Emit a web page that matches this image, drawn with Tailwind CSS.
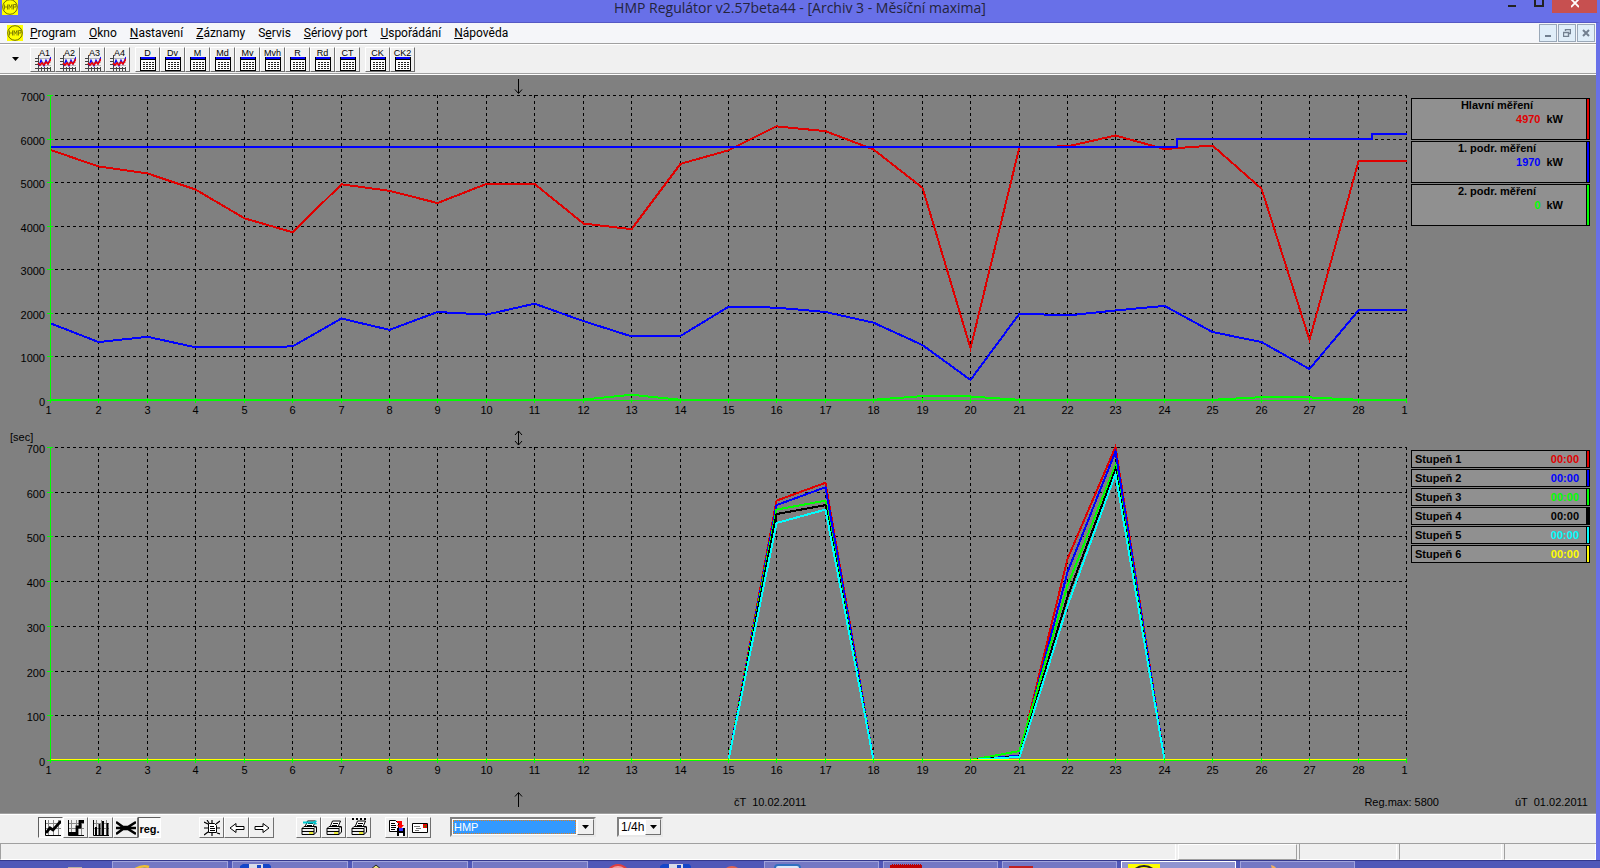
<!DOCTYPE html>
<html lang="cs">
<head>
<meta charset="utf-8">
<meta name="viewport" content="width=device-width, initial-scale=1">
<title>HMP Regulátor v2.57beta44 - [Archiv 3 - Měsíční maxima]</title>
<script src="https://cdn.jsdelivr.net/npm/@tailwindcss/browser@4"></script>
</head>
<body class="min-h-screen bg-[#f0f0f0] font-['Liberation_Sans',Arial,sans-serif] text-[11px] text-black">

<svg class="hidden" aria-hidden="true">
  <symbol id="i-hmp" viewBox="0 0 16 16">
    <rect width="16" height="16" fill="#ff0"/>
    <circle cx="8" cy="8" r="7.3" fill="none" stroke="#6b6b00"/>
    <path d="M2.5 5.5v5M5.5 5.5v5M2.5 8h3M7 10.500v-5l1.500 3 1.500-3v5M11.500 10.500v-5h2.500v2.500h-2.500" fill="none" stroke="#6b6b00" stroke-width=".8"/>
  </symbol>
  <symbol id="i-arch" viewBox="0 0 16 16">
    <path d="M3.500 0v16M0 13.500h16M0 3.500h3M0 6.500h3M0 9.500h3M6.500 12v4M9.500 12v4M12.500 12v4M15.500 12v4" stroke="#444" fill="none" shape-rendering="crispEdges"/>
    <path d="M4 3.500h12M4 7.500h12M4 10.500h12" stroke="#bbb" fill="none" shape-rendering="crispEdges"/>
    <path d="M4 11l2-6 3 6 2-6 2 4 3-7" stroke="#00f" stroke-width="1.200" fill="none"/>
    <path d="M3 8l2 2 2-2 2 2 2-3 2 2 3-5" stroke="#e00" stroke-width="1.600" fill="none"/>
  </symbol>
  <symbol id="i-table" viewBox="0 0 16 14">
    <g shape-rendering="crispEdges">
    <rect width="16" height="14" fill="#000"/>
    <rect x="1" y="0" width="14" height="2" fill="#00f"/>
    <rect x="1" y="3" width="14" height="10" fill="#fff"/>
    <path d="M3 5.500h11M3 7.500h11M3 9.500h11M3 11.500h11" stroke="#222" stroke-dasharray="2 1"/>
    </g>
  </symbol>
  <symbol id="i-grid" viewBox="0 0 16 16"><path d="M0 3.500h16M0 8.500h16M3.500 0v16M8.500 0v16M13.500 0v16" stroke="#888" fill="none" shape-rendering="crispEdges"/><path d="M.5 0v15.500H16" stroke="#000" fill="none"/></symbol>
  <symbol id="i-line" viewBox="0 0 16 16"><use href="#i-grid"/><path d="M1 13l4-5 3 2 8-9" stroke="#000" stroke-width="2.800" fill="none"/></symbol>
  <symbol id="i-step" viewBox="0 0 16 16"><use href="#i-grid"/><path d="M1 13.500h8V7h3V1.500h4" stroke="#000" stroke-width="2.800" fill="none"/></symbol>
  <symbol id="i-bars" viewBox="0 0 16 16"><use href="#i-grid"/><path d="M3 16V7M6.500 16V4M10 16V1M14.500 16V3" stroke="#000" stroke-width="2" fill="none"/></symbol>
  <symbol id="i-cross" viewBox="0 0 20 16"><path d="M0 2l7 5h5l8-5M0 14l7-5h5l8 5M0 8h20" stroke="#000" stroke-width="2.600" fill="none"/></symbol>
  <symbol id="i-gear" viewBox="0 0 16 16"><path d="M4.500 3.500h6l2 2v7h-8z" stroke="#000" fill="#fff"/><path d="M0 2l4 2M3 0l2 3M8 0v3M16 1l-4 3M0 8h4M13 8h3M0 15l4-3M16 14l-3-1M8 13v3M6 6.500h4M6 8.500h5M6 10.500h5" stroke="#000" stroke-width="1.200" fill="none"/></symbol>
  <symbol id="i-left" viewBox="0 0 16 12"><path d="M1 6l6-4.500v3h8v3H7v3z" stroke="#000" fill="#fff"/></symbol>
  <symbol id="i-right" viewBox="0 0 16 12"><path d="M15 6L9 1.500v3H1v3h8v3z" stroke="#000" fill="#fff"/></symbol>
  <symbol id="i-print" viewBox="0 0 16 16"><path d="M4 7l2.500-6h8L12 7" stroke="#000" fill="#fff"/><path d="M1 8.500l2-2h12l-2 2v6H1z" stroke="#000" fill="#eee"/><path d="M1 8.500h12M13 14.500l2.500-2.500V6.500M7 3.500h5M6 5.500h5M1 11.500h12" stroke="#000" fill="none"/><path d="M8 13h4" stroke="#ee0" stroke-width="1.500"/></symbol>
  <symbol id="i-copy" viewBox="0 0 16 16"><path d="M.5.500h6l3 3v8h-9z" stroke="#000" fill="#fff"/><path d="M2 3.500h4M2 5.500h5M2 7.500h5M2 9.500h4" stroke="#000"/><path d="M8 1h5v4h2l-3.500 4L8 5h2V3H8z" fill="#f00"/><path d="M8 8h8v8H8z"/><path d="M10 8h4v3h-4z" fill="#33f"/><path d="M10 13h4v3h-4z" fill="#fff"/></symbol>
  <symbol id="i-mail" viewBox="0 0 16 10"><path d="M.5.500h15v9H.5z" stroke="#000" fill="#fff"/><path d="M2 3.500h6M4 5.500h5M3 7.500h4" stroke="#777"/><path d="M11 1h4v4h-4z" fill="#e00"/><path d="M12.500 2.500h1.500v1.500h-1.500z" fill="#0a0"/></symbol>
  <symbol id="i-down" viewBox="0 0 7 4"><path d="M0 0h7L3.500 4z"/></symbol>
  <symbol id="i-floppy" viewBox="0 0 32 14"><path d="M0 2l3-2h26l2 2v12H0z" fill="#1446c8"/><path d="M9 0h14v14H9z" fill="#d8dce8"/><path d="M17 1h4v13h-4z" fill="#1446c8"/></symbol>
</svg>

<div class="flex min-h-screen flex-col">
  <!-- Window caption -->
  <header class="relative flex h-[22px] items-start justify-center overflow-hidden bg-[#6870e8]">
    <svg class="absolute -top-px left-[2px] size-4"><use href="#i-hmp"/></svg>
    <h1 class="font-['Open_Sans',sans-serif] text-[14px] leading-4 text-[#24243c]">HMP Regulátor v2.57beta44 - [Archiv 3 - Měsíční maxima]</h1>
    <div class="absolute top-0 right-[3px] flex h-[13px]">
      <button aria-label="Minimalizovat" class="w-[27px]"><svg class="mx-auto h-[13px] w-2" viewBox="0 0 8 13"><path d="M0 5h8v2H0z" fill="#222"/></svg></button>
      <button aria-label="Maximalizovat" class="w-[27px]"><svg class="mx-auto h-[13px] w-[10px]" viewBox="0 0 10 13"><path d="M1-2h8v8H1z" fill="none" stroke="#222" stroke-width="2"/></svg></button>
      <button aria-label="Zavřít" class="w-[45px] bg-[#c75050]"><svg class="mx-auto h-[13px] w-2" viewBox="0 0 8 13"><path d="M0-1l8 8M8-1L0 7" fill="none" stroke="#fff" stroke-width="1.800"/></svg></button>
    </div>
  </header>

  <div class="flex flex-1 flex-col border-t border-r-4 border-t-[#5558c4] border-r-[#6870e8]">
    <!-- Menu bar -->
    <nav class="flex h-[21px] items-center border-b border-[#a0a0a0] bg-[#f5f6f9] pl-[7px] font-[Roboto,sans-serif] text-[12px] leading-4">
      <svg class="mr-[7px] size-4"><use href="#i-hmp"/></svg>
      <div id="menu" class="flex gap-[13px]">
        <button><u>P</u>rogram</button><button><u>O</u>kno</button><button><u>N</u>astavení</button><button><u>Z</u>áznamy</button><button>S<u>e</u>rvis</button><button><u>S</u>ériový port</button><button><u>U</u>spořádání</button><button><u>N</u>ápověda</button>
      </div>
      <div class="ml-auto flex gap-px pr-px">
        <button aria-label="Minimalizovat okno" class="flex h-[18px] w-[18px] items-center justify-center border border-[#9aa8b8] bg-[#e0eef9]"><svg class="size-2" viewBox="0 0 8 8"><path d="M1 6h6v2H1z" fill="#728090"/></svg></button>
        <button aria-label="Obnovit okno" class="flex h-[18px] w-[18px] items-center justify-center border border-[#9aa8b8] bg-[#e0eef9]"><svg class="size-2" viewBox="0 0 8 8"><path d="M2.500 2V.500h5v4H6M.5 3.500h5v4h-5z" fill="none" stroke="#728090" stroke-width="1.400"/></svg></button>
        <button aria-label="Zavřít okno" class="flex h-[18px] w-[18px] items-center justify-center border border-[#9aa8b8] bg-[#e0eef9]"><svg class="size-2" viewBox="0 0 8 8"><path d="M1 1l6 6M7 1L1 7" stroke="#728090" stroke-width="2"/></svg></button>
      </div>
    </nav>

    <!-- Archive toolbar -->
    <div class="flex h-[30px] items-center border-t border-b border-t-white border-b-[#a0a0a0]">
      <button aria-label="Další" class="flex w-[30px] justify-center"><svg class="h-1 w-[7px]"><use href="#i-down"/></svg></button>
      <div id="archives" class="flex gap-[5px]"></div>
    </div>

    <!-- Charts and legends -->
    <main class="flex flex-1 flex-col border-t border-white bg-[#808080]">
      <div class="flex">
        <div class="flex min-w-0 flex-1 flex-col">
          <svg id="power" class="h-[350px] w-full" role="img" aria-label="Měsíční maxima, kW"></svg>
          <svg id="stages" class="h-[352px] w-full" role="img" aria-label="Stupně, sekundy"></svg>
        </div>
        <aside class="flex w-[186px] shrink-0 flex-col pt-[23px] pr-[6px] pl-px font-bold leading-[14px]">
          <section id="meters" class="flex flex-col gap-px"></section>
          <section id="levels" class="mt-[224px] flex flex-col gap-px"></section>
        </aside>
      </div>
      <div class="flex h-[34px] items-start pr-[8px]">
        <div class="flex w-[523px] justify-end pt-[15px]"><svg class="h-[15px] w-[9px]" viewBox="0 0 9 15"><path d="M4.500 15V1M1 4.500l3.500-4 3.500 4" fill="none" stroke="#000"/></svg></div>
        <time class="ml-[211px] pt-[18px] leading-[14px] whitespace-pre" datetime="2011-02-10">čT  10.02.2011</time>
        <p class="mr-[76px] ml-auto pt-[18px] leading-[14px]">Reg.max: 5800</p>
        <time class="pt-[18px] leading-[14px] whitespace-pre" datetime="2011-02-01">úT  01.02.2011</time>
      </div>
    </main>

    <!-- View toolbar -->
    <div class="flex h-[31px] items-start border-t border-b border-t-[#a0a0a0] border-b-[#a0a0a0] pt-[3px] pl-[38px] shadow-[inset_0_1px_0_#fff]">
      <div class="flex">
        <button aria-label="Spojnice" aria-pressed="true" class="flex h-[21px] w-[25px] items-center justify-center border border-t-[#606060] border-r-white border-b-white border-l-[#606060] bg-[#f8f8f8] pl-1"><svg class="size-4"><use href="#i-line"/></svg></button>
        <button aria-label="Schody" class="flex h-[21px] w-[25px] items-center justify-center border border-t-white border-r-[#707070] border-b-[#707070] border-l-white"><svg class="size-4"><use href="#i-step"/></svg></button>
        <button aria-label="Sloupce" class="flex h-[21px] w-[25px] items-center justify-center border border-t-white border-r-[#707070] border-b-[#707070] border-l-white"><svg class="size-4"><use href="#i-bars"/></svg></button>
        <button aria-label="Kříž" class="flex h-[21px] w-[25px] items-center justify-center border border-t-white border-r-[#707070] border-b-[#707070] border-l-white"><svg class="h-4 w-5"><use href="#i-cross"/></svg></button>
        <button aria-pressed="true" class="flex h-[21px] w-[23px] items-end justify-center border border-t-[#606060] border-r-white border-b-white border-l-[#606060] bg-[#f8f8f8] text-[11px] font-bold">reg.</button>
      </div>
      <div class="ml-[38px] flex">
        <button aria-label="Nastavení" class="flex h-[21px] w-[25px] items-center justify-center border border-t-white border-r-[#707070] border-b-[#707070] border-l-white"><svg class="size-4"><use href="#i-gear"/></svg></button>
        <button aria-label="Předchozí" class="flex h-[21px] w-[25px] items-center justify-center border border-t-white border-r-[#707070] border-b-[#707070] border-l-white"><svg class="h-3 w-4"><use href="#i-left"/></svg></button>
        <button aria-label="Následující" class="flex h-[21px] w-[25px] items-center justify-center border border-t-white border-r-[#707070] border-b-[#707070] border-l-white"><svg class="h-3 w-4"><use href="#i-right"/></svg></button>
      </div>
      <div class="ml-[22px] flex">
        <button aria-label="Nastavení tisku" class="flex h-[21px] w-[25px] items-center justify-center border border-t-white border-r-[#707070] border-b-[#707070] border-l-white"><svg class="size-4" viewBox="0 0 16 16"><use href="#i-print"/><path d="M2 2.500h11M15.500 1l-3 1.500 3 1.500" stroke="#00c8d0" stroke-width="1.800" fill="none"/></svg></button>
        <button aria-label="Tisk" class="flex h-[21px] w-[25px] items-center justify-center border border-t-white border-r-[#707070] border-b-[#707070] border-l-white"><svg class="size-4"><use href="#i-print"/></svg></button>
        <button aria-label="Tisk řady" class="flex h-[21px] w-[25px] items-center justify-center border border-t-white border-r-[#707070] border-b-[#707070] border-l-white"><svg class="h-[19px] w-4" viewBox="0 0 16 19"><use href="#i-print" y="2" width="16" height="16"/><path d="M1 1h14" stroke="#000" stroke-width="2" stroke-dasharray="2 2"/></svg></button>
      </div>
      <div class="ml-[14px] flex">
        <button aria-label="Uložit" class="flex h-[21px] w-[23px] items-center justify-center border border-t-white border-r-[#707070] border-b-[#707070] border-l-white"><svg class="size-4"><use href="#i-copy"/></svg></button>
        <button aria-label="Poslat" class="flex h-[21px] w-[23px] items-center justify-center border border-t-white border-r-[#707070] border-b-[#707070] border-l-white"><svg class="h-[10px] w-4"><use href="#i-mail"/></svg></button>
      </div>
      <div class="relative ml-[19px] flex h-[20px] w-[146px] border-2 border-t-[#808080] border-r-[#e8e8e8] border-b-[#e8e8e8] border-l-[#808080] bg-white">
        <select aria-label="Stanice" class="m-px mr-[18px] flex-1 appearance-none border border-dotted border-[#e08020] bg-[#3399ff] text-[11px] leading-3 text-white"><option>HMP</option></select>
        <span class="pointer-events-none absolute top-0 right-0 flex h-4 w-[17px] items-center justify-center border border-t-white border-r-[#707070] border-b-[#707070] border-l-white bg-[#f0f0f0]"><svg class="h-1 w-[7px]"><use href="#i-down"/></svg></span>
      </div>
      <div class="relative ml-[21px] flex h-[20px] w-[46px] border-2 border-t-[#808080] border-r-[#e8e8e8] border-b-[#e8e8e8] border-l-[#808080] bg-white">
        <select aria-label="Interval" class="flex-1 appearance-none bg-white pl-[2px] text-[12px] leading-4"><option>1/4h</option></select>
        <span class="pointer-events-none absolute top-0 right-0 flex h-4 w-4 items-center justify-center border border-t-white border-r-[#707070] border-b-[#707070] border-l-white bg-[#f0f0f0]"><svg class="h-1 w-[7px]"><use href="#i-down"/></svg></span>
      </div>
    </div>

    <!-- Status bar -->
    <div class="flex h-4 gap-[2px]">
      <div class="flex-1 border border-t-0 border-r-white border-b-white border-l-[#a0a0a0]"></div>
      <div class="w-[119px] border border-t-white border-r-[#a0a0a0] border-b-[#a0a0a0] border-l-white"></div>
      <div class="w-[98px] border border-t-0 border-r-white border-b-white border-l-[#a0a0a0]"></div>
      <div class="w-[103px] border border-t-0 border-r-white border-b-white border-l-[#a0a0a0]"></div>
      <div class="w-[92px] border border-t-0 border-r-white border-b-white border-l-[#a0a0a0]"></div>
    </div>
  </div>

  <!-- Task bar, cut off by the lower screen edge -->
  <footer class="flex h-[8px] items-start gap-[4px] overflow-hidden border-t border-[#34388c] bg-[#5058b8]">
    <div class="flex w-[108px] justify-end pt-[6px] pr-[26px]"><div class="h-2 w-[14px] bg-[#b8b0a0]"></div></div>
    <button aria-label="Internet Explorer" class="flex h-10 w-[116px] items-start border border-[#a0a4dc] bg-[#7478c4] pt-[2px] pl-4"><svg class="h-3 w-6" viewBox="0 0 24 12"><path d="M2 8Q12 0 20 3" fill="none" stroke="#f0c030" stroke-width="2.500"/><path d="M6 12q5-10 11-6" fill="none" stroke="#8cc8f0" stroke-width="2"/></svg></button>
    <button aria-label="Disketa" class="flex h-10 w-[116px] items-start border border-[#a0a4dc] bg-[#7478c4] pt-[2px] pl-[7px]"><svg class="h-[14px] w-8"><use href="#i-floppy"/></svg></button>
    <button aria-label="Aplikace" class="flex h-10 w-[116px] items-start border border-[#a0a4dc] bg-[#7478c4] pt-[2px] pl-[17px]"><svg class="h-3 w-3" viewBox="0 0 12 12"><path d="M0 6l6-5 6 5z" fill="#e8e080" stroke="#222"/></svg></button>
    <button aria-label="Okno" class="h-10 w-[116px] border border-[#a0a4dc] bg-[#7478c4]"></button>
    <div class="flex w-[168px] items-start gap-[30px] pt-[3px] pl-[14px]">
      <span class="size-[24px] rounded-full border-2 border-[#e04040] bg-[#f4a0a0]"></span>
      <svg class="h-[14px] w-8"><use href="#i-floppy"/></svg>
      <span class="mt-[2px] size-[20px] rounded-full bg-[#e06050]"></span>
    </div>
    <button aria-label="Dokument" class="flex h-10 w-[115px] items-start border border-[#a0a4dc] bg-[#7478c4] pt-[2px] pl-[9px]"><span class="block h-5 w-[27px] rounded border-2 border-[#3070c0] bg-[#dce8f8]"></span></button>
    <button aria-label="Archiv" class="flex h-10 w-[115px] items-start border border-[#a0a4dc] bg-[#7478c4] pt-[2px] pl-[6px]"><span class="block h-5 w-8 border-t border-dotted border-[#7478c4] bg-[#c00000]"></span></button>
    <button aria-label="Dokument PDF" class="flex h-10 w-[115px] items-start border border-[#a0a4dc] bg-[#7478c4] pt-[4px] pl-[6px]"><span class="block h-5 w-6 border-t-2 border-[#c02020] bg-[#e8e8e8]"></span></button>
    <button aria-label="HMP Regulátor" class="flex h-10 w-[115px] items-start border border-white bg-[#9094d0] pt-[2px] pl-[6px]"><svg class="h-8 w-8" viewBox="0 0 32 32"><path d="M0 0h32v32H0z" fill="#ff0"/><circle cx="16" cy="16" r="14" fill="none" stroke="#222" stroke-width="2"/></svg></button>
    <button aria-label="Kreslení" class="flex h-10 w-[115px] items-start border border-[#a0a4dc] bg-[#7478c4] pt-[3px] pl-[30px]"><svg class="h-3 w-2" viewBox="0 0 8 12"><path d="M0 0q6 1 7 8l-5 1z" fill="#f0b060"/></svg></button>
  </footer>
</div>

<script>
const groups = [['A1', 'A2', 'A3', 'A4'], ['D', 'Dv', 'M', 'Md', 'Mv', 'Mvh', 'R', 'Rd', 'CT'], ['CK', 'CK2']];
document.getElementById('archives').innerHTML = groups.map((g, i) =>
  `<div class="flex">${g.map(t => `<button class="flex h-[25px] w-[25px] flex-col items-center overflow-hidden border border-t-white border-r-[#707070] border-b-[#707070] border-l-white pt-px text-[9px] leading-[8px]">${i ? `<span class="block h-[8px]">${t}</span><svg class="h-[14px] w-4 shrink-0"><use href="#i-table"/></svg>` : `<span class="block h-[6px] pl-1">${t}</span><svg class="size-4 shrink-0"><use href="#i-arch"/></svg>`}</button>`).join('')}</div>`).join('');

const meters = [['Hlavní měření', '4970', '#e00000'], ['1. podr. měření', '1970', '#0000ff'], ['2. podr. měření', '0', '#00ff00']];
document.getElementById('meters').innerHTML = meters.map(([n, v, c]) =>
  `<div class="flex h-[42px] border border-black bg-[#909090]"><div class="-mt-px flex-1"><p class="pr-1 text-center">${n}</p><p class="flex justify-end gap-[6px] pr-[23px]"><span style="color:${c}">${v}</span><span>kW</span></p></div><div class="w-[3px] border-l border-black" style="background:${c}"></div></div>`).join('');

const levels = ['#e00000', '#0000ff', '#00ff00', '#000000', '#00ffff', '#ffff00'];
document.getElementById('levels').innerHTML = levels.map((c, i) =>
  `<div class="flex h-[18px] border border-black bg-[#909090]"><p class="flex flex-1 items-center justify-between pr-[7px] pl-[3px]"><span>Stupeň ${i + 1}</span><span style="color:${c}">00:00</span></p><div class="w-[3px] border-l border-black" style="background:${c}"></div></div>`).join('');

const power = {
  red: [5740, 5360, 5200, 4830, 4170, 3850, 4950, 4800, 4520, 4960, 4960, 4050, 3920, 5420, 5730, 6280, 6170, 5750, 4870, 1190, 5810, 5820, 6070, 5760, 5840, 4850, 1380, 5480, 5480],
  blue: [1760, 1330, 1450, 1210, 1210, 1230, 1870, 1610, 2020, 1960, 2210, 1810, 1460, 1470, 2140, 2120, 2020, 1775, 1260, 460, 1985, 1940, 2055, 2160, 1560, 1330, 710, 2055, 2055],
  green: [0, 0, 0, 0, 0, 0, 0, 0, 0, 0, 0, 10, 120, 5, 0, 0, 0, 5, 90, 80, 5, 0, 0, 0, 5, 65, 60, 5, 5]
};
const stage = (a, b, c, d, e) => Array.from({length: 29}, (_, i) => ({15: a, 16: b, 20: c, 21: d, 22: e})[i] || 0);
const stages = [['#e00000', stage(580, 620, 10, 450, 700)], ['#00f', stage(570, 610, 10, 420, 690)], ['#0f0', stage(560, 580, 20, 390, 660)], ['#000', stage(550, 570, 8, 365, 650)], ['#0ff', stage(530, 560, 7, 345, 640)]];

const line = (x1, y1, x2, y2, c, extra = '') => `<path d="M${x1} ${y1}L${x2} ${y2}" stroke="${c}" fill="none" shape-rendering="crispEdges" ${extra}/>`;
function draw(id, top, bottom, unit, series, extra) {
  const svg = document.getElementById(id), w = svg.getBoundingClientRect().width, x0 = 50, dx = (w - 4 - x0) / 28;
  const X = i => Math.round(x0 + i * dx) + .5, Y = v => bottom - v / (7 * unit) * (bottom - top);
  let s = '';
  for (let k = 1; k <= 7; k++) s += line(55, Math.round(Y(k * unit)) + .5, X(28), Math.round(Y(k * unit)) + .5, '#000', 'stroke-dasharray="3 3"');
  for (let i = 1; i <= 28; i++) s += line(X(i), top, X(i), bottom, '#000', 'stroke-dasharray="3 3"');
  const poly = (c, pts) => `<polyline points="${pts.map(p => p.join(',')).join(' ')}" fill="none" stroke="${c}" stroke-width="2" shape-rendering="crispEdges"/>`;
  for (const [c, d] of series) s += poly(c, d.map((v, i) => [X(i), Y(v)]));
  s += extra({X, Y, x0, dx, poly});
  s += line(X(0), top, X(0), bottom, '#0f0') + line(X(0), bottom + .5, X(28), bottom + .5, '#0f0');
  for (let k = 0; k <= 7; k++) {
    const y = Math.round(Y(k * unit)) + .5;
    s += line(47, y, 53, y, '#0f0') + `<text x="45" y="${y + 5}" text-anchor="end">${k * unit}</text>`;
  }
  for (let i = 0; i <= 28; i++) {
    s += line(X(i), bottom - 2, X(i), bottom + 3, '#0f0');
    s += `<text x="${X(i) - (i % 28 ? 0 : 2)}" y="${bottom + 14}" text-anchor="middle">${i < 28 ? i + 1 : 1}</text>`;
  }
  svg.innerHTML = `<g font-size="11">${s}</g>`;
}
function render() {
  draw('power', 20, 325, 1000, [['#0f0', power.green], ['#00f', power.blue], ['#e00000', power.red]], ({X, Y, x0, dx, poly}) =>
    poly('#00f', [[X(0), Y(5800)], [x0 + 23.270 * dx, Y(5800)], [x0 + 23.270 * dx, Y(5990)], [x0 + 27.300 * dx, Y(5990)], [x0 + 27.300 * dx, Y(6100)], [X(28), Y(6100)]]) +
    '<path d="M518.500 4v14M515 14.500l3.500 4 3.500-4" fill="none" stroke="#000"/>');
  draw('stages', 22, 335, 100, stages, ({X}) =>
    line(X(0), 334.5, X(28), 334.5, '#ff0') +
    '<path d="M518.500 6v14M515 10l3.500-4 3.500 4M515 16l3.500 4 3.500-4" fill="none" stroke="#000"/><text x="10" y="16">[sec]</text>');
}
render();
new ResizeObserver(render).observe(document.getElementById('power').parentElement);
addEventListener('load', render);
</script>
</body>
</html>
